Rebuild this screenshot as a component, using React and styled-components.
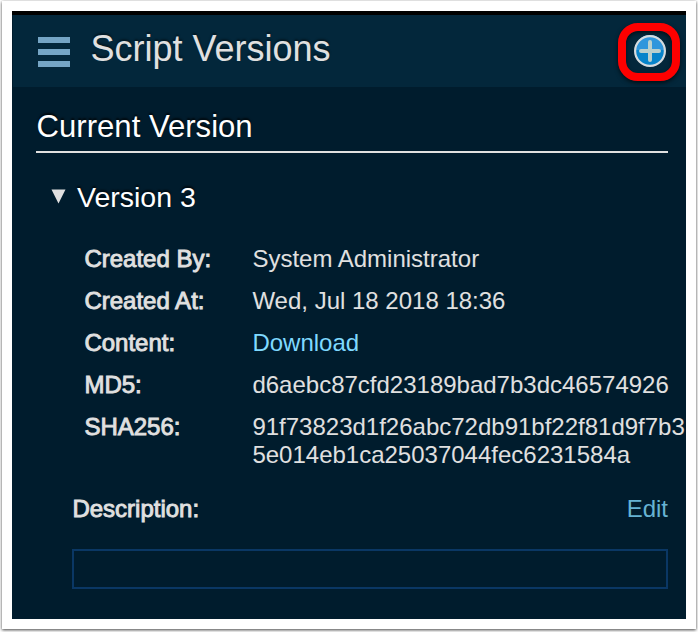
import React from "react";
import styled, { createGlobalStyle } from "styled-components";

const GlobalStyle = createGlobalStyle`
  * { box-sizing: border-box; }
  body {
    margin: 0;
    background: #fff;
    font-family: "Liberation Sans", Arial, sans-serif;
    color: #e0e0e0;
  }
`;

const Page = styled.div`
  width: 698px;
  height: 632px;
  padding: 1px 2px 3px;
  overflow: hidden;
`;

const Frame = styled.div`
  width: 694px;
  height: 628px;
  padding: 10px;
  background: #fff;
  box-shadow: 0 1px 3px rgba(0, 0, 0, 0.75);
`;

const Panel = styled.main`
  width: 674px;
  height: 608px;
  border-top: 4px solid #000;
  background: #001c2d;
`;

const Header = styled.header`
  display: flex;
  align-items: flex-start;
  height: 72px;
  margin-left: 1px;
  padding: 0 6px 0 25px;
  background: #03273b;
`;

const MenuButton = styled.button`
  display: flex;
  flex-direction: column;
  gap: 6px;
  width: 32px;
  margin: 22px 20.4px 0 0;
  padding: 0;
  border: 0;
  background: none;
`;

const MenuBar = styled.span`
  height: 6px;
  background: #75a5c5;
`;

const Title = styled.h1`
  flex: 1;
  margin: 13px 0 0;
  font-size: 36px;
  line-height: 42px;
  font-weight: 400;
  text-shadow: 0 -2px 2px rgba(0, 0, 0, 0.4);
`;

const AddButton = styled.button`
  display: flex;
  align-items: center;
  justify-content: center;
  width: 62px;
  height: 58px;
  margin-top: 8px;
  padding: 0 0 2px 2px;
  border: 8px solid #fe0000;
  border-radius: 20px;
  background: none;
  box-shadow: 0 2px 4px rgba(0, 0, 0, 0.65), inset 0 2px 4px rgba(0, 0, 0, 0.6);
`;

const Content = styled.section`
  padding: 22px 18px 0 24px;
`;

const SectionTitle = styled.h2`
  height: 44px;
  margin: 0;
  padding-left: 0.6px;
  border-bottom: 2px solid #e0e0e0;
  color: #fff;
  font-size: 31.1px;
  line-height: 36px;
  font-weight: 400;
  text-shadow: 0 -2px 2px rgba(0, 0, 0, 0.7);
`;

const VersionHeading = styled.div`
  display: flex;
  align-items: flex-start;
  height: 92px;
  padding: 28px 0 0 15px;
`;

const Arrow = styled.svg`
  flex: none;
  width: 15px;
  height: 15px;
  margin: 8px 11px 0 0;
`;

const VersionTitle = styled.h3`
  margin: 0;
  color: #fff;
  font-size: 28.5px;
  line-height: 32px;
  font-weight: 400;
  text-shadow: 0 -2px 2px rgba(0, 0, 0, 0.7);
`;

const Details = styled.dl`
  display: grid;
  grid-template-columns: 168px 432px;
  row-gap: 14px;
  width: 600px;
  margin: 0 0 0 48.4px;
  font-size: 24px;
  line-height: 28px;
`;

const Label = styled.dt`
  -webkit-text-stroke: 0.9px #e0e0e0;
`;

const Value = styled.dd`
  margin: 0;
  white-space: pre-line;
`;

const Link = styled.a`
  color: ${(p) => (p.$muted ? "#66b3d3" : "#7fd9ff")};
`;

const DescriptionRow = styled.div`
  display: flex;
  justify-content: space-between;
  margin: 26px 0 0 36.4px;
  font-size: 24px;
  line-height: 28px;
`;

const DescriptionLabel = styled.span`
  -webkit-text-stroke: 0.9px #e0e0e0;
`;

const DescriptionBox = styled.div`
  height: 40px;
  margin: 26px 0 0 36px;
  border: 2px solid #0a3764;
`;

const details = [
  ["Created By:", "System Administrator"],
  ["Created At:", "Wed, Jul 18 2018 18:36"],
  ["Content:", <Link key="download">Download</Link>],
  ["MD5:", "d6aebc87cfd23189bad7b3dc46574926"],
  ["SHA256:", "91f73823d1f26abc72db91bf22f81d9f7b3\n5e014eb1ca25037044fec6231584a"],
];

function PlusIcon() {
  return (
    <svg width="32" height="32" viewBox="0 0 32 32">
      <circle cx="16" cy="16" r="15" fill="#0684ca" />
      <path d="M1 15a15 15 0 0 1 30 0z" fill="#2e96dc" />
      <circle cx="16" cy="16" r="14.9" fill="none" stroke="#d5dbde" strokeWidth="2.2" />
      <path d="M16 7v18M7 16h18" stroke="#b9d0cd" strokeWidth="4" strokeLinecap="round" />
    </svg>
  );
}

export default function App() {
  return (
    <Page>
      <GlobalStyle />
      <Frame>
        <Panel>
          <Header>
            <MenuButton aria-label="Menu">
              <MenuBar />
              <MenuBar />
              <MenuBar />
            </MenuButton>
            <Title>Script Versions</Title>
            <AddButton aria-label="Add version">
              <PlusIcon />
            </AddButton>
          </Header>
          <Content>
            <SectionTitle>Current Version</SectionTitle>
            <VersionHeading>
              <Arrow viewBox="0 0 15 15">
                <path d="M.5.5h14L7.5 14.5z" fill="#e0e0e0" />
              </Arrow>
              <VersionTitle>Version 3</VersionTitle>
            </VersionHeading>
            <Details>
              {details.map(([label, value]) => (
                <React.Fragment key={label}>
                  <Label>{label}</Label>
                  <Value>{value}</Value>
                </React.Fragment>
              ))}
            </Details>
            <DescriptionRow>
              <DescriptionLabel>Description:</DescriptionLabel>
              <Link $muted>Edit</Link>
            </DescriptionRow>
            <DescriptionBox />
          </Content>
        </Panel>
      </Frame>
    </Page>
  );
}
